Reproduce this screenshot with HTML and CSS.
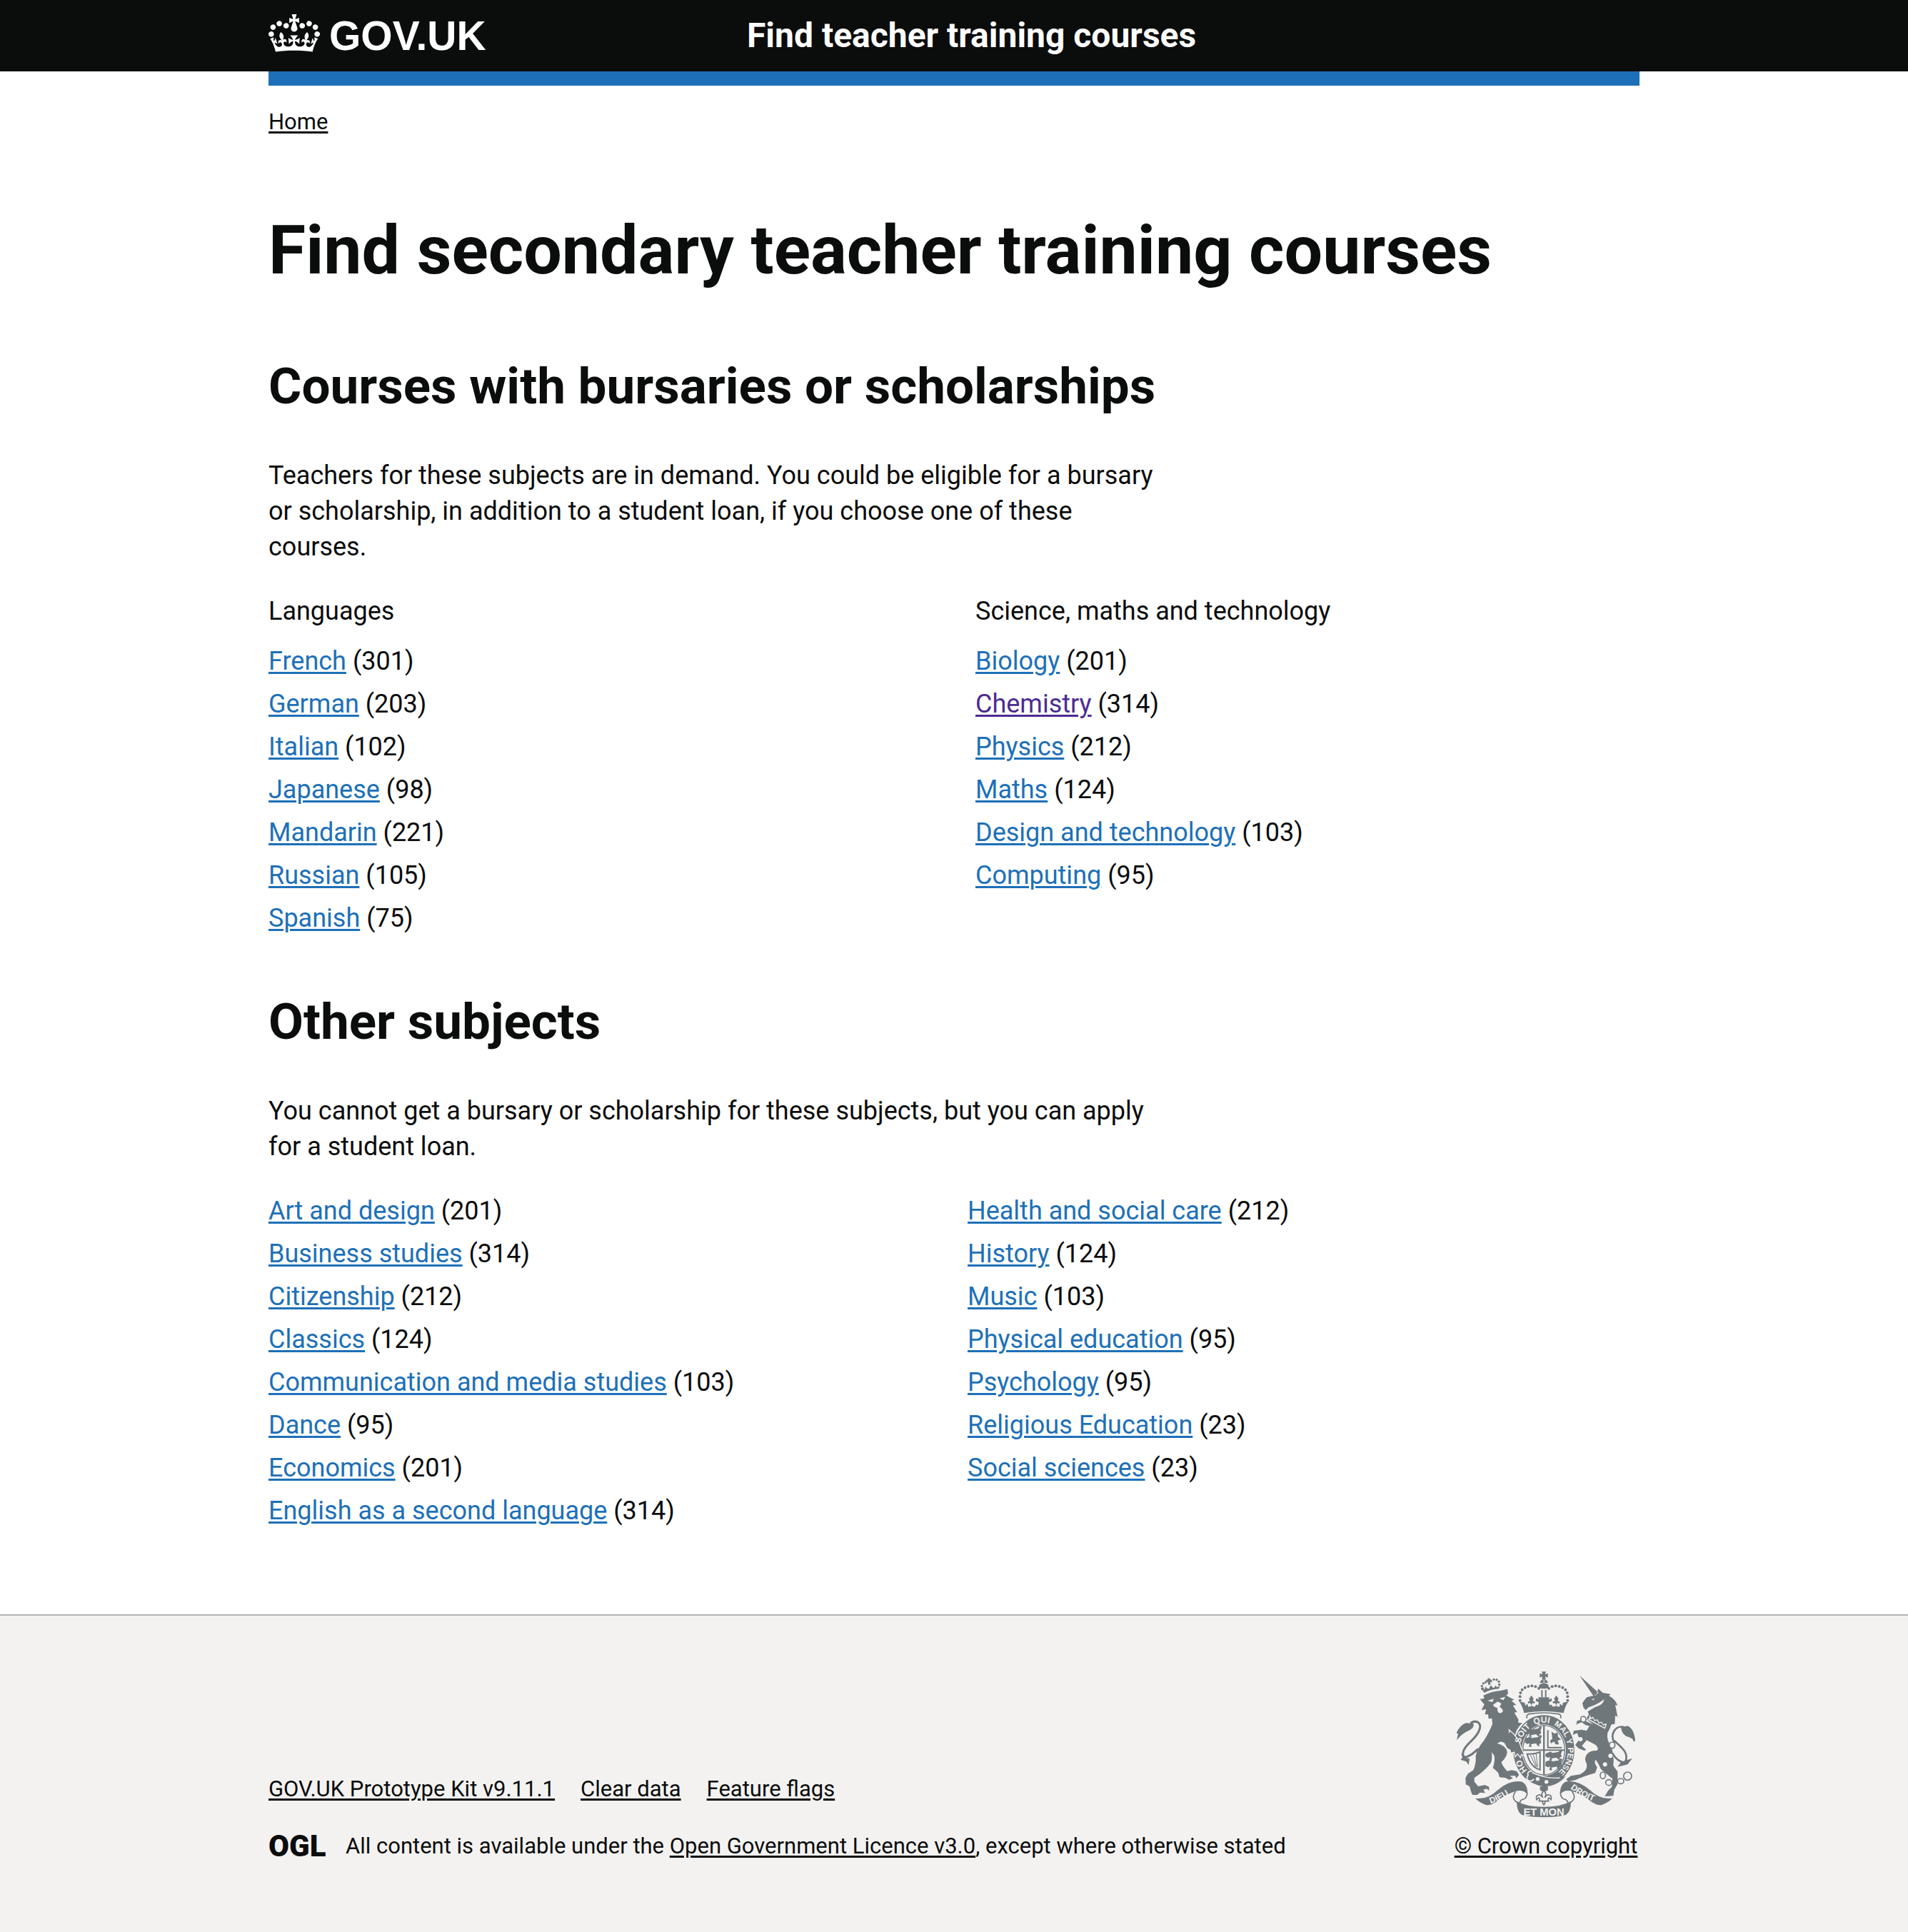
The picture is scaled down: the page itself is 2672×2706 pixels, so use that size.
FILE: index.html
```
<!DOCTYPE html>
<html lang="en">
<head>
<meta charset="utf-8">
<meta name="viewport" content="width=device-width, initial-scale=1">
<title>Find secondary teacher training courses</title>
<link rel="stylesheet" href="styles.css">
</head>
<body>
<header class="header">
  <div class="container header-inner">
    <a class="logo" href="#">
      <svg class="logo-crown" viewBox="0 0 132 97" aria-hidden="true"><path fill="currentColor" fill-rule="evenodd" d="M25 30.2c3.5 1.5 7.7-.2 9.1-3.7 1.5-3.6-.2-7.8-3.9-9.2-3.6-1.4-7.6.3-9.1 3.9-1.4 3.5.3 7.5 3.9 9zM9 39.5c3.6 1.5 7.8-.2 9.2-3.7 1.5-3.6-.2-7.8-3.9-9.1-3.6-1.5-7.6.2-9.1 3.8-1.4 3.5.3 7.5 3.8 9zM4.4 57.2c3.5 1.5 7.7-.2 9.1-3.8 1.5-3.6-.2-7.7-3.9-9.1-3.5-1.5-7.6.3-9.1 3.8-1.4 3.5.3 7.6 3.9 9.1zm38.3-21.4c3.5 1.5 7.7-.2 9.1-3.8 1.5-3.6-.2-7.7-3.9-9.1-3.6-1.5-7.6.3-9.1 3.8-1.3 3.6.4 7.7 3.9 9.1zm64.4-5.6c-3.6 1.5-7.8-.2-9.1-3.7-1.5-3.6.2-7.8 3.8-9.2 3.6-1.4 7.7.3 9.2 3.9 1.3 3.5-.4 7.5-3.9 9zm15.9 9.3c-3.6 1.5-7.7-.2-9.1-3.7-1.5-3.6.2-7.8 3.7-9.1 3.6-1.5 7.7.2 9.2 3.8 1.5 3.5-.3 7.5-3.8 9zm4.7 17.7c-3.6 1.5-7.8-.2-9.2-3.8-1.5-3.6.2-7.7 3.9-9.1 3.6-1.5 7.7.3 9.2 3.8 1.3 3.5-.4 7.6-3.9 9.1zM89.3 35.8c-3.6 1.5-7.8-.2-9.2-3.8-1.4-3.6.2-7.7 3.9-9.1 3.6-1.5 7.7.3 9.2 3.8 1.4 3.6-.3 7.7-3.9 9.1zM69.7 17.7l8.9 4.7V9.3l-8.9 2.8c-.2-.3-.5-.6-.9-.9L72.4 0H59.6l3.5 11.2c-.3.3-.6.5-.9.9l-8.8-2.8v13.1l8.8-4.7c.3.3.6.7.9.9l-5 15.4v.1c-.2.8-.4 1.6-.4 2.4 0 4.1 3.1 7.5 7 8.1h.2c.3 0 .7.1 1 .1.4 0 .7 0 1-.1h.2c4-.6 7.1-4.1 7.1-8.1 0-.8-.1-1.7-.4-2.4V34l-5.1-15.4c.4-.2.7-.6 1-.9zM66 92.8c16.9 0 32.8 1.1 47.1 3.2 4-16.9 8.9-26.7 14-33.5l-9.6-3.4c1 4.9 1.1 7.2 0 10.2-1.5-1.4-3-4.3-4.2-8.7L108.6 76c2.8-2 5-3.2 7.5-3.3-4.4 9.4-10 11.9-13.6 11.2-4.3-.8-6.3-4.6-5.6-7.9 1-4.7 5.7-5.9 8-.5 4.3-8.7-3-11.4-7.6-8.8 7.1-7.2 7.9-13.5 2.1-21.1-8 6.1-8.1 12.3-4.5 20.8-4.7-5.4-12.1-2.5-9.5 6.2 3.4-5.2 7.9-2 7.2 3.1-.6 4.3-6.4 7.8-13.5 7.2-10.3-.9-10.9-8-11.2-13.8 2.5-.5 7.1 1.8 11 7.3L80.2 60c-4.1 4.4-8 5.3-12.3 5.4 1.4-4.4 8-11.6 8-11.6H55.5s6.4 7.2 7.9 11.6c-4.2-.1-8-1-12.3-5.4l1.4 16.4c3.9-5.5 8.5-7.7 10.9-7.3-.3 5.8-.9 12.8-11.1 13.8-7.2.6-12.9-2.9-13.5-7.2-.7-5 3.8-8.3 7.1-3.1 2.7-8.7-4.6-11.6-9.4-6.2 3.7-8.5 3.6-14.7-4.6-20.8-5.8 7.6-5 13.9 2.2 21.1-4.7-2.6-11.9.1-7.7 8.8 2.3-5.5 7.1-4.2 8.1.5.7 3.3-1.3 7.1-5.7 7.9-3.5.7-9-1.8-13.5-11.2 2.5.1 4.7 1.3 7.5 3.3l-4.7-15.4c-1.2 4.4-2.7 7.2-4.3 8.7-1.1-3-.9-5.3 0-10.2l-9.5 3.4c5 6.9 9.9 16.7 14 33.5 14.8-2.1 30.8-3.2 47.7-3.2z"/></svg>
      <span>GOV.UK</span>
    </a>
    <a class="service-name" href="#">Find teacher training courses</a>
  </div>
</header>

<div class="container page">
  <nav class="breadcrumbs" aria-label="Breadcrumb"><a href="#">Home</a></nav>
  <main>
    <h1>Find secondary teacher training courses</h1>

    <section>
      <h2>Courses with bursaries or scholarships</h2>
      <p class="lead">Teachers for these subjects are in demand. You could be eligible for a bursary or scholarship, in addition to a student loan, if you choose one of these courses.</p>
      <div class="grid">
        <div>
          <h3>Languages</h3>
          <ul class="list">
            <li><a href="#">French</a> (301)</li>
            <li><a href="#">German</a> (203)</li>
            <li><a href="#">Italian</a> (102)</li>
            <li><a href="#">Japanese</a> (98)</li>
            <li><a href="#">Mandarin</a> (221)</li>
            <li><a href="#">Russian</a> (105)</li>
            <li><a href="#">Spanish</a> (75)</li>
          </ul>
        </div>
        <div>
          <h3>Science, maths and technology</h3>
          <ul class="list">
            <li><a href="#">Biology</a> (201)</li>
            <li><a class="visited" href="#">Chemistry</a> (314)</li>
            <li><a href="#">Physics</a> (212)</li>
            <li><a href="#">Maths</a> (124)</li>
            <li><a href="#">Design and technology</a> (103)</li>
            <li><a href="#">Computing</a> (95)</li>
          </ul>
        </div>
      </div>
    </section>

    <section>
      <h2>Other subjects</h2>
      <p class="lead">You cannot get a bursary or scholarship for these subjects, but you can apply for a student loan.</p>
      <ul class="list list-columns">
        <li><a href="#">Art and design</a> (201)</li>
        <li><a href="#">Business studies</a> (314)</li>
        <li><a href="#">Citizenship</a> (212)</li>
        <li><a href="#">Classics</a> (124)</li>
        <li><a href="#">Communication and media studies</a> (103)</li>
        <li><a href="#">Dance</a> (95)</li>
        <li><a href="#">Economics</a> (201)</li>
        <li><a href="#">English as a second language</a> (314)</li>
        <li><a href="#">Health and social care</a> (212)</li>
        <li><a href="#">History</a> (124)</li>
        <li><a href="#">Music</a> (103)</li>
        <li><a href="#">Physical education</a> (95)</li>
        <li><a href="#">Psychology</a> (95)</li>
        <li><a href="#">Religious Education</a> (23)</li>
        <li><a href="#">Social sciences</a> (23)</li>
      </ul>
    </section>
  </main>
</div>

<footer class="footer">
  <div class="container footer-inner">
    <div class="footer-meta">
      <ul class="footer-links">
        <li><a href="#">GOV.UK Prototype Kit v9.11.1</a></li>
        <li><a href="#">Clear data</a></li>
        <li><a href="#">Feature flags</a></li>
      </ul>
      <div class="licence">
        <span class="ogl">OGL</span>
        <span>All content is available under the <a href="#">Open Government Licence v3.0</a>, except where otherwise stated</span>
      </div>
    </div>
    <a class="copyright" href="#">
      <svg class="crest" viewBox="60 65 750 615" role="img" aria-label="Royal coat of arms">
        <defs>
          <path id="ring" d="M426 512A101 116 0 0 1 426 280A101 116 0 0 1 426 512"/>
          <path id="ribbon-left" d="M203 620Q255 604 312 558"/>
          <path id="ribbon-right" d="M537 556Q590 600 672 622"/>
          <g id="half-crown">
            <circle cx="326" cy="187" r="6"/><circle cx="326" cy="171" r="6"/><circle cx="328" cy="155" r="6"/><circle cx="335" cy="142" r="6"/><circle cx="347" cy="133" r="6"/><circle cx="361" cy="128" r="6"/><circle cx="376" cy="126" r="6"/><circle cx="391" cy="129" r="6"/><circle cx="405" cy="136" r="6"/>
            <path d="M332 193l14 4 2 12 10-8 2 13 16-4-8-13-6 4-4-8 10-4-4-9 10-14 9 14-4 9 11 4-5 8-6-4-6 12 14 5 8-10 6 4 4-14-12-4v-12l13 5-4-9h25v58q-42 0-84 8-6-28-19-47z"/>
            <path d="M415 143h6v30h-6z"/>
          </g>
          <g id="beasts">
            <path d="M348 312l20-8 8 6 26-5 8-10 8 4-6 14 3 12-9 5 2 9-9-3-5-7-22 4 3 8-12-2 4-12-11 3-10-7z"/>
            <path d="M348 346l20-6 8 5 26-4 8-9 8 4-6 14 3 16-9 4 2 10-9-3-5-10-22 4 3 12-12-2 4-14-11 3-10-7z"/>
          </g>
        </defs>
        <g fill="#6f777b">
          <!-- lion -->
          <circle cx="168" cy="138" r="6"/><circle cx="166" cy="126" r="5"/><circle cx="172" cy="115" r="5"/><circle cx="182" cy="110" r="5"/><circle cx="204" cy="106" r="5"/><circle cx="216" cy="99" r="5"/><circle cx="228" cy="100" r="5"/><circle cx="237" cy="108" r="5"/><circle cx="239" cy="120" r="5"/>
          <path d="M184 100l8-1-2-5 9-1 0 6 6-1 1 7-7 1 4 14-10 2-3-14-6 1zM168 143l7 12q34-16 62-17l4-14-12 8-6-8-6 10-8-2-2-8-8 4-2 10-10-2-6-8-4 12z"/>
          <path d="M158 182L176 178L172 166Q208 148 245 146L273 139L276 158L268 166L302 184L290 188L310 206L296 208L314 236L302 238L320 268L318 280L336 282Q320 296 308 320L334 370L340 412L334 424L322 412L318 424L306 404L296 414L298 396L284 404L286 384L270 386L272 368L245 360L230 368Q268 376 272 404Q270 426 248 446Q250 460 272 484L290 480L312 484L322 500L310 514L306 504L284 504L296 514L280 520L264 512L240 510L234 490L212 470Q222 440 218 420L207 404Q210 434 204 448Q182 480 134 512L134 528L150 548L178 542L196 550L196 566L186 558L172 562L180 576L158 574L146 584L126 584L120 570L114 548L98 540L97 512L108 494L130 480Q142 452 140 420Q144 392 174 356Q198 318 210 286L208 262L194 264L192 246L178 246L184 224L164 228L176 204Z"/>
          <path d="M60 354l6-28-8 0q14-34 40-44l32 2q6 18-20 30-26 10-50 40z"/>
          <path d="M118 282C150 264 168 288 152 318 138 352 88 376 86 410 84 440 120 420 150 390" fill="none" stroke="#6f777b" stroke-width="9"/>
          <path d="M78 408q6 20 36 24l-4 26-10-14-24-8 8-8z"/>
          <!-- unicorn -->
          <path d="M576 82L634 168L656 155ZM646 164L655 138L674 155L706 160L700 168Q726 182 736 208L726 206L736 256L726 250L724 286L710 288L698 300L616 246L610 234L640 216Q676 206 680 182Q648 206 614 216L602 228L592 216L588 198Q598 184 606 174Z"/>
          <path d="M618 240l92 48-12 28-92-54z"/>
          <path d="M600 262l98 50q-14 30 6 60 20 38 14 90l18 24v52l-14 24-4 26-36 2 14-24 16-16 2-34-48-40q-8-22-22-40-10 8 6 32l-8 24q-50 14-84 30l-30 6-8-10 20-14 38-6q34-18 28-44-14-26 4-44 14-14 38-12 12-8-4-24l-38-20-20 24 18 16-8 4-24-10-14-14 18-24-10-26-18 8 4-18 32-4 22 4 12-20q-18 0-32-16l-14 6-10 6 4-18 24-4 26 12 18 8z"/>
          <path d="M724 366C700 330 728 294 756 298 786 302 800 330 806 358M722 356C760 390 784 410 768 446 752 450 730 436 714 408" fill="none" stroke="#6f777b" stroke-width="8"/>
          <path d="M750 300l30-6q26 16 30 62l-24-14q-32-6-36-42zM798 430l-20 26-42 10 14-20z"/>
          <g fill="none" stroke="#6f777b" stroke-width="5">
            <circle cx="778" cy="505" r="17"/><ellipse cx="749" cy="526" rx="13" ry="11"/><ellipse cx="699" cy="532" rx="13" ry="12"/><ellipse cx="674" cy="502" rx="11" ry="14"/><ellipse cx="713" cy="375" rx="12" ry="13" fill="#f3f2f1"/><ellipse cx="592" cy="266" rx="11" ry="12" fill="#f3f2f1"/>
          </g>
          <!-- crown -->
          <use href="#half-crown"/>
          <use href="#half-crown" transform="translate(852 0) scale(-1 1)"/>
          <path d="M417 66h18l-4 12 12-5v18l-12-5 4 13h-18l4-13-12 5V73l12 5zM406 122q20-16 40 0v12q-20 8-40 0zM409 113q4-13 16-14v14zM428 99q12 1 16 14h-16z"/>
          <path d="M356 262q-6-14 8-18 62-10 124 0 14 4 8 18" fill="none" stroke="#6f777b" stroke-width="5"/>
          <!-- garter and shield -->
          <ellipse cx="426" cy="396" rx="131" ry="150" stroke="#f3f2f1" stroke-width="5"/>
          <ellipse cx="426" cy="396" rx="93" ry="108" fill="#f3f2f1"/>
          <ellipse cx="426" cy="396" rx="88" ry="104" fill="none" stroke="#6f777b" stroke-width="4"/>
          <path d="M338 393h176v6H338zM423 292h7v206h-7z"/>
          <use href="#beasts"/>
          <use href="#beasts" transform="translate(86 98)"/>
          <path d="M440 312h6v70h56v6h-62zM458 318l12 8 14-4 2 18 12 10-14 6 6 16-14 0-8-12-12 8-4-12 10-8z"/>
          <path d="M356 412q30 2 54-8v74q-40-10-54-66z" fill="none" stroke="#6f777b" stroke-width="6"/>
          <path d="M370 416l22 50M382 414l14 52M394 412l6 56" stroke="#6f777b" stroke-width="3"/>
          <path d="M350 478q60 44 142 36l26-8q-40 44-92 42-44-2-76-42z"/>
          <path d="M376 490q60 28 118 22" fill="none" stroke="#f3f2f1" stroke-width="4"/>
          <path d="M376 484q-22 0-16 18-12 12 4 24 16 0 20-10" fill="none" stroke="#f3f2f1" stroke-width="5"/>
          <!-- lion's forepaw resting on the garter -->
          <path d="M280 310Q324 346 330 384L346 420L332 414L328 428L316 412L306 424L302 404L286 408Z" stroke="#f3f2f1" stroke-width="4"/>
          <path d="M240 330L290 322L300 404L272 386Z"/>
          <!-- ribbon and fleur-de-lis -->
          <path d="M138 598q50 8 96-36 50-42 96-34 28 8 28 54-18-22-50-14-42 12-84 46-24 16-42 12-26-10-44-28z"/>
          <path d="M714 598q-50 8-96-36-50-42-96-34-28 8-28 54 18-22 50-14 42 12 84 46 24 16 42 12 26-10 44-28z"/>
          <path d="M308 568q-22 30 6 48M356 574q0 26-22 30-10 4-8 16M544 568q22 30-6 48M496 574q0 26 22 30 10 4 8 16" fill="none" stroke="#6f777b" stroke-width="5"/>
          <path d="M312 610q40 24 114 24t114-24q0 46-22 58-40 10-92 10t-92-10q-22-12-22-58z"/>
          <path d="M410 548h33v16l-12 6h-9l-12-6z"/>
          <path d="M426 564q-14 16-4 32-8-14-18-12-14 4-8 20l8-8q8 4 2 14h40q-6-10 2-14l8 8q6-16-8-20-10-2-18 12 10-16-4-32zM420 610q0 10 6 16 6-6 6-16" fill="none" stroke="#6f777b" stroke-width="5"/>
        </g>
        <g fill="#f3f2f1">
          <path d="M190 188l26-8-6 14zM240 178l24-6-8 14zM212 206l20-14 16 8-8 14q14 6 14 20-8 10-18 4-8-10-4-20-12 0-20-12zM626 182l14-4-6 8z"/>
          <circle cx="400" cy="517" r="8"/><circle cx="437" cy="529" r="8"/>
          <circle cx="706" cy="420" r="9"/><circle cx="683" cy="456" r="9"/><circle cx="580" cy="350" r="9"/><circle cx="572" cy="291" r="7"/>
          <path d="M620 252l2 12 10-6 8 14 10-4 8 14 10-4 8 12 12-4-6 18-66-36z" fill="none" stroke="#f3f2f1" stroke-width="4" stroke-linejoin="round"/>
        </g>
        <g class="crest-motto">
          <text font-size="36"><textPath href="#ring" startOffset="78">HO</textPath></text>
          <text font-size="36"><textPath href="#ring" startOffset="198">SOIT</textPath></text>
          <text font-size="36"><textPath href="#ring" startOffset="300">QUI</textPath></text>
          <text font-size="34"><textPath href="#ring" startOffset="384">MAL</textPath></text>
          <text font-size="34"><textPath href="#ring" startOffset="466">Y</textPath></text>
          <text font-size="34"><textPath href="#ring" startOffset="500">PENSE</textPath></text>
          <text font-size="36"><textPath href="#ribbon-left">DIEU</textPath></text>
          <text font-size="36"><textPath href="#ribbon-right">DROIT</textPath></text>
          <text font-size="44" x="426" y="671" text-anchor="middle">ET MON</text>
        </g>
      </svg>
      <span>© Crown copyright</span>
    </a>
  </div>
</footer>
</body>
</html>
```
FILE: styles.css
```
* {
  box-sizing: border-box;
}

body {
  display: flex;
  flex-direction: column;
  min-height: 100vh;
  margin: 0;
  background: #fff;
  color: #0b0c0c;
  font-family: Roboto, "Liberation Sans", sans-serif;
  font-size: 36px;
  line-height: 50px;
}

h1,
h2,
h3,
p,
ul {
  margin: 0;
  padding: 0;
}

ul {
  list-style: none;
}

a {
  color: #1d70b8;
  text-decoration-thickness: 3px;
  text-underline-offset: 3px;
}

.container {
  width: 100%;
  max-width: 1920px;
  margin: 0 auto;
}

/* Header */
.header {
  background: linear-gradient(#0b0c0c 100px, #fff 100px);
}

.header-inner {
  display: grid;
  grid-template-columns: calc(100% / 3) 1fr;
  column-gap: 30px;
  align-items: center;
  height: 120px;
  border-bottom: 20px solid #1d70b8;
}

.header a {
  color: #fff;
  text-decoration: none;
}

.logo {
  display: flex;
  align-items: flex-start;
  gap: 13px;
  font-family: "Liberation Sans", Arial, sans-serif;
  font-size: 57px;
  font-weight: 700;
  line-height: 60px;
}

.logo-crown {
  width: 72px;
  height: 53px;
}

.service-name {
  font-size: 48px;
  font-weight: 700;
}

/* Page */
.page {
  padding: 31px 0 110px;
}

.breadcrumbs {
  font-size: 31px;
  line-height: 40px;
  margin-bottom: 110px;
}

.breadcrumbs a,
.footer a {
  color: #0b0c0c;
}

h1 {
  font-size: 95px;
  line-height: 100px;
  margin-bottom: 100px;
}

h2 {
  font-size: 71px;
  line-height: 80px;
  margin-bottom: 60px;
}

h3 {
  font-size: 36px;
  font-weight: 400;
  line-height: 50px;
  margin-bottom: 20px;
}

section + section {
  margin-top: 70px;
}

.lead {
  max-width: 1260px;
  margin-bottom: 40px;
}

.grid {
  display: grid;
  grid-template-columns: 1fr 1fr;
  column-gap: 60px;
}

.list li {
  padding-bottom: 10px;
  break-inside: avoid;
}

.list-columns {
  columns: 2;
  column-gap: 38px;
}

.list a.visited {
  color: #4c2c92;
}

/* Footer */
.footer {
  flex-grow: 1;
  background: #f3f2f1;
  border-top: 2px solid #b1b4b6;
  padding: 78px 0 98px;
  font-size: 31px;
  line-height: 40px;
}

.footer-inner {
  display: flex;
  justify-content: space-between;
  align-items: flex-end;
}

.footer-links {
  display: flex;
  gap: 36px;
  margin-bottom: 40px;
}

.licence {
  display: flex;
  align-items: center;
  gap: 26px;
}

.ogl {
  width: 82px;
  font-size: 42px;
  font-weight: 900;
}

.copyright {
  display: flex;
  flex-direction: column;
  align-items: center;
  gap: 20px;
  min-width: 262px;
}

.crest {
  width: 250px;
  height: 205px;
}

.crest-motto {
  fill: #f3f2f1;
  font-family: "Liberation Sans", Arial, sans-serif;
  font-weight: 700;
}
```
